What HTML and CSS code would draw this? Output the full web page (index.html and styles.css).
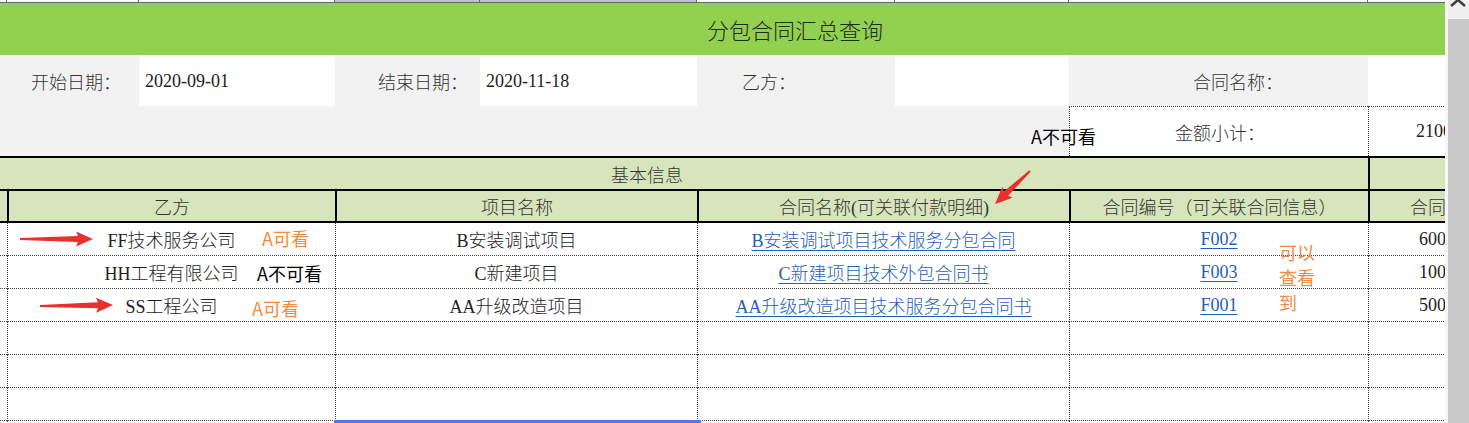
FILE: index.html
```html
<!DOCTYPE html>
<html lang="zh-CN">
<head>
<meta charset="utf-8">
<title>分包合同汇总查询</title>
<link rel="stylesheet" href="styles.css">
</head>
<body>
<div class="screen">
  <div class="viewport">
    <div class="sheet">
      <div class="strip"></div>
      <div class="strip"></div>
      <div class="strip"></div>
      <div class="strip strip-sel"></div>
      <div class="strip strip-sel"></div>
      <div class="strip"></div>
      <div class="strip"></div>
      <div class="strip"></div>
      <div class="strip"></div>

      <div class="title">分包合同汇总查询</div>

      <div class="lbl lbl-start">开始日期：</div>
      <div class="inp">2020-09-01</div>
      <div class="lbl lbl-end">结束日期：</div>
      <div class="inp">2020-11-18</div>
      <div class="lbl lbl-party">乙方：</div>
      <div class="inp"></div>
      <div class="lbl lbl-name">合同名称：</div>
      <div class="inp"></div>

      <div class="blank"></div>
      <div class="sum sum-lbl">金额小计：</div>
      <div class="sum sum-val">2100</div>

      <div class="rule"></div>

      <div class="group">基本信息</div>
      <div class="group-end"></div>

      <div class="rule"></div>

      <div class="th c-pad"></div>
      <div class="th c-party">乙方</div>
      <div class="th c-proj">项目名称</div>
      <div class="th c-name">合同名称(可关联付款明细)</div>
      <div class="th c-no">合同编号（可关联合同信息）</div>
      <div class="th c-amt">合同</div>

      <div class="rule"></div>

      <div class="td c-pad"></div>
      <div class="td c-party">FF技术服务公司</div>
      <div class="td c-proj">B安装调试项目</div>
      <div class="td c-name"><a class="link" href="#">B安装调试项目技术服务分包合同</a></div>
      <div class="td c-no"><a class="link" href="#">F002</a></div>
      <div class="td c-amt">600</div>

      <div class="td c-pad"></div>
      <div class="td c-party">HH工程有限公司</div>
      <div class="td c-proj">C新建项目</div>
      <div class="td c-name"><a class="link" href="#">C新建项目技术外包合同书</a></div>
      <div class="td c-no"><a class="link" href="#">F003</a></div>
      <div class="td c-amt">1000</div>

      <div class="td c-pad"></div>
      <div class="td c-party">SS工程公司</div>
      <div class="td c-proj">AA升级改造项目</div>
      <div class="td c-name"><a class="link" href="#">AA升级改造项目技术服务分包合同书</a></div>
      <div class="td c-no"><a class="link" href="#">F001</a></div>
      <div class="td c-amt">500</div>

      <div class="td c-pad"></div>
      <div class="td c-party"></div>
      <div class="td c-proj"></div>
      <div class="td c-name"></div>
      <div class="td c-no"></div>
      <div class="td c-amt"></div>

      <div class="td c-pad"></div>
      <div class="td c-party"></div>
      <div class="td c-proj"></div>
      <div class="td c-name"></div>
      <div class="td c-no"></div>
      <div class="td c-amt"></div>

      <div class="td c-pad"></div>
      <div class="td c-party"></div>
      <div class="td c-proj"></div>
      <div class="td c-name"></div>
      <div class="td c-no"></div>
      <div class="td c-amt"></div>

      <div class="td c-pad"></div>
      <div class="td c-party"></div>
      <div class="td c-proj"></div>
      <div class="td c-name"></div>
      <div class="td c-no"></div>
      <div class="td c-amt"></div>
    </div>
  </div>

  <div class="scrollbar">
    <div class="scroll-top">
      <svg class="scroll-arrow" width="21" height="19" viewBox="0 0 21 19"><polyline points="3,7 10,1 17,7" fill="none" stroke="#3c3c3c" stroke-width="2.5"/></svg>
    </div>
    <div class="thumb"></div>
  </div>

  <div class="selection"></div>

  <svg class="marks" width="1469" height="423" viewBox="0 0 1469 423">
    <polygon transform="translate(20,239)" points="0,-1 58,-3 56,-7.5 73,0 56,7.5 58,3 0,1" fill="#e8302c"/>
    <polygon transform="translate(40,306) rotate(-0.8)" points="0,-1 58,-3 56,-7.5 73,0 56,7.5 58,3 0,1" fill="#e8302c"/>
    <polygon transform="translate(1030,171) rotate(136.7)" points="0,-1 33,-3 31,-7.5 48,0 31,7.5 33,3 0,1" fill="#e8302c"/>
  </svg>

  <span class="note note-ok note-ff">A可看</span>
  <span class="note note-no note-hh">A不可看</span>
  <span class="note note-ok note-ss">A可看</span>
  <span class="note note-no note-sum">A不可看</span>
  <span class="note note-ok note-no-col">可以<br>查看<br>到</span>
</div>
</body>
</html>
```

FILE: styles.css
```css
* { box-sizing: border-box; }

html, body {
  margin: 0;
  padding: 0;
}

body {
  width: 1469px;
  height: 423px;
  overflow: hidden;
  background: #ffffff;
  font-family: "Liberation Serif", "Noto Sans CJK SC", serif;
  font-size: 18px;
  font-weight: 300;
  color: #222222;
}

.screen {
  position: relative;
  display: flex;
  width: 1469px;
  height: 423px;
}

.viewport {
  flex: none;
  width: 1445px;
  height: 423px;
  overflow: hidden;
}

.sheet {
  display: grid;
  width: 1524px;
  grid-template-columns: 7px 132px 196px 145px 217px 198px 174px 299px 156px;
  grid-template-rows: 3px 52px 51px 50px 2px 31px 2px 30px 2px repeat(7, 33px);
}

.sheet > div {
  display: flex;
  align-items: center;
  min-width: 0;
  white-space: nowrap;
  overflow: hidden;
}

/* column header strip at the very top */
.strip {
  background: #fafafa;
  border-bottom: 1px solid #666666;
  border-right: 1px solid #666666;
}

.strip-sel {
  background: #bcc0da;
}

.title {
  grid-column: 1 / -1;
  justify-content: center;
  padding-left: 66px;
  background: #92d050;
  font-size: 22px;
  color: #1f2a16;
}

/* filter area */
.lbl {
  background: #f2f2f2;
  color: #333333;
}

.lbl-start { grid-column: span 2; padding-left: 31px; }
.lbl-end { padding-left: 43px; }
.lbl-party { padding-left: 45px; }
.lbl-name { padding-left: 124px; }

.inp {
  background: #ffffff;
  padding-left: 6px;
  padding-top: 2px;
  color: #222222;
}

.blank {
  grid-column: span 7;
  background: #f2f2f2;
}

.sum {
  background: #ffffff;
  border-top: 1px dotted #444444;
  border-left: 1px dotted #444444;
}

.sum-lbl {
  padding-left: 105px;
  color: #333333;
}

.sum-val {
  padding-left: 47px;
}

.rule {
  grid-column: 1 / -1;
  background: #000000;
}

/* header */
.group {
  grid-column: span 8;
  justify-content: center;
  padding-right: 74px;
  background: #d8e4bc;
  color: #333333;
}

.group-end {
  background: #d8e4bc;
  border-left: 2px solid #000000;
}

.c-party, .c-proj, .c-name { grid-column: span 2; }

.th {
  justify-content: center;
  background: #d8e4bc;
  color: #333333;
}

.th.c-party, .th.c-proj, .th.c-name, .th.c-no, .th.c-amt {
  border-left: 2px solid #000000;
}

.th.c-amt {
  justify-content: flex-start;
  padding-left: 40px;
}

/* data rows */
.td {
  justify-content: center;
  background: #ffffff;
  border-bottom: 1px dotted #444444;
  color: #1e1e1e;
}

.td.c-party, .td.c-proj, .td.c-name, .td.c-no, .td.c-amt {
  border-left: 1px dotted #444444;
}

.td.c-amt {
  justify-content: flex-start;
  padding-left: 50px;
}

.link {
  color: #1f5fb9;
  text-decoration: underline;
  text-decoration-thickness: 1px;
  text-underline-offset: 3px;
}

/* scrollbar */
.scrollbar {
  flex: none;
  width: 24px;
  height: 423px;
  display: flex;
  flex-direction: column;
  background: #f7f7f7;
}

.scroll-top {
  height: 19px;
  margin-left: 3px;
  background: #f0f0f0;
}

.scroll-arrow {
  display: block;
  margin-top: -1px;
}

.thumb {
  flex: 1;
  margin-left: 3px;
  background: #c9c9c9;
}

/* overlays */
.selection {
  position: absolute;
  left: 334px;
  top: 420px;
  width: 367px;
  height: 3px;
  background: #4a7be8;
}

.marks {
  position: absolute;
  left: 0;
  top: 0;
  pointer-events: none;
}

.note {
  position: absolute;
  font-family: "Noto Sans CJK SC", sans-serif;
  font-size: 18px;
  font-weight: 400;
  line-height: 20px;
  white-space: nowrap;
}

.note-ok { color: #ef8a3e; }
.note-no { color: #000000; }

.note-ff { left: 262px; top: 228px; }
.note-hh { left: 257px; top: 263px; }
.note-ss { left: 252px; top: 298px; }
.note-sum { left: 1031px; top: 126px; }
.note-no-col { left: 1279px; top: 240px; line-height: 25px; }
```
